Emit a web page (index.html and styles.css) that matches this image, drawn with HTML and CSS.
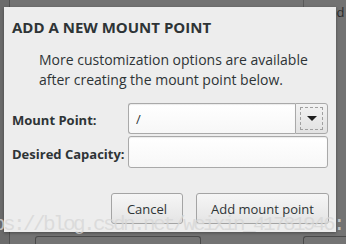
FILE: index.html
```html
<!DOCTYPE html>
<html lang="en">
<head>
  <meta charset="UTF-8" />
  <meta name="viewport" content="width=device-width, initial-scale=1.0" />
  <title>Add a New Mount Point</title>
  <link rel="stylesheet" href="styles.css">
</head>
<body>
  <div class="desk">
    <div class="side-pane"></div>
    <div class="back-win">Mod</div>
    <div class="back-btn back-btn-left"></div>
    <div class="back-btn back-btn-right"></div>

    <div class="dialog">
      <h2 class="title">ADD A NEW MOUNT POINT</h2>
      <p class="intro">More customization options are available after creating the mount point below.</p>

      <div class="form">
        <label for="mountPoint">Mount Point:</label>
        <div class="combo">
          <input type="text" id="mountPoint" value="/" />
          <button class="combo-btn" type="button"><span class="focus"><span class="arrow"></span></span></button>
        </div>

        <label for="capacity">Desired Capacity:</label>
        <input type="text" id="capacity" class="entry" />
      </div>

      <div class="actions">
        <button class="btn btn-cancel" type="button">Cancel</button>
        <button class="btn btn-add" type="button">Add mount point</button>
      </div>
    </div>

    <div class="watermark"><span>https://blog.csdn.net/weixin_41781946:</span></div>
  </div>
</body>
</html>
```

FILE: styles.css
```css
html, body {
  margin: 0;
  padding: 0;
}
body {
  width: 346px;
  height: 244px;
  overflow: hidden;
  background-color: #737373;
  font-family: "Open Sans", "DejaVu Sans", sans-serif;
  color: #2e3436;
}
.desk {
  position: relative;
  width: 346px;
  height: 244px;
  overflow: hidden;
}
.side-pane {
  position: absolute;
  left: 0;
  top: 0;
  width: 9px;
  height: 244px;
  background-color: #6b6b6b;
  border-right: 1px solid #505050;
}
.back-win {
  position: absolute;
  left: 303px;
  right: 0;
  top: 0;
  height: 40px;
  border-left: 1px solid #5a5a5a;
  font-size: 13px;
  line-height: 24px;
  color: #2b2b2b;
  padding-left: 13px;
  box-sizing: border-box;
  overflow: hidden;
  white-space: nowrap;
}
.back-btn {
  position: absolute;
  top: 236px;
  height: 8px;
  box-sizing: border-box;
  border: 1px solid #4a4a4a;
  border-bottom: none;
  border-radius: 3px 3px 0 0;
  background-color: #747474;
}
.back-btn-left {
  left: 35px;
  width: 166px;
}
.back-btn-right {
  left: 303px;
  right: 0;
  border-right: none;
  border-radius: 3px 0 0 0;
}
.dialog {
  position: absolute;
  left: 4px;
  top: 7px;
  width: 332px;
  height: 225px;
  box-sizing: border-box;
  padding: 11px 7px 8px 8px;
  background-color: #ededed;
  box-shadow: 0 1px 3px rgba(0, 0, 0, 0.35);
  display: flex;
  flex-direction: column;
}
.title {
  margin: 0;
  font-size: 15px;
  line-height: 18px;
  font-weight: bold;
  color: #2e3436;
}
.intro {
  margin: 14px 0 0 27px;
  font-size: 14px;
  line-height: 20px;
  color: #2e3436;
}
.form {
  margin-top: 13px;
  display: grid;
  grid-template-columns: 116px 200px;
  row-gap: 2px;
  align-items: center;
}
.form label {
  font-size: 13px;
  font-weight: bold;
  color: #2e3436;
  padding-top: 3px;
}
.combo {
  display: flex;
  height: 31px;
}
.combo input, .entry {
  box-sizing: border-box;
  height: 31px;
  border: 1px solid #a9a9a9;
  border-radius: 3px;
  background: linear-gradient(#ffffff, #f7f7f7);
  box-shadow: inset 0 1px 1px rgba(0, 0, 0, 0.08);
  padding: 0 7px;
  font-family: "Open Sans", "DejaVu Sans", sans-serif;
  font-size: 13px;
  color: #2e3436;
  outline: none;
}
.entry {
  width: 200px;
  height: 32px;
}
.combo input {
  flex: 1;
  min-width: 0;
  border-right: none;
  border-radius: 3px 0 0 3px;
}
.combo-btn {
  width: 33px;
  height: 31px;
  padding: 3px 4px;
  border: 1px solid #a9a9a9;
  border-radius: 0 3px 3px 0;
  background: linear-gradient(#f2f2f2, #e2e2e2);
  box-sizing: border-box;
}
.combo-btn .focus {
  display: flex;
  align-items: center;
  justify-content: center;
  height: 100%;
  border: 1px dashed #a0a0a0;
  box-sizing: border-box;
}
.arrow {
  width: 0;
  height: 0;
  border-left: 5px solid transparent;
  border-right: 5px solid transparent;
  border-top: 5px solid #1e1e1e;
}
.actions {
  margin-top: auto;
  display: flex;
  justify-content: flex-end;
  gap: 13px;
}
.btn {
  height: 31px;
  box-sizing: border-box;
  border: 1px solid #a4a4a4;
  border-radius: 3px;
  background: linear-gradient(#f6f6f6, #e4e4e4);
  font-family: "Open Sans", "DejaVu Sans", sans-serif;
  font-size: 13px;
  color: #2e3436;
  padding: 0;
}
.btn-cancel {
  width: 72px;
}
.btn-add {
  width: 133px;
}
.watermark {
  position: absolute;
  left: 0;
  right: 0;
  top: 211px;
  overflow: hidden;
  white-space: nowrap;
  pointer-events: none;
}
.watermark span {
  display: block;
  margin-left: -37px;
  font-family: "Liberation Mono", monospace;
  font-size: 21px;
  letter-spacing: -2.6px;
  line-height: 28px;
  color: rgba(215, 215, 215, 0.8);
}
```
